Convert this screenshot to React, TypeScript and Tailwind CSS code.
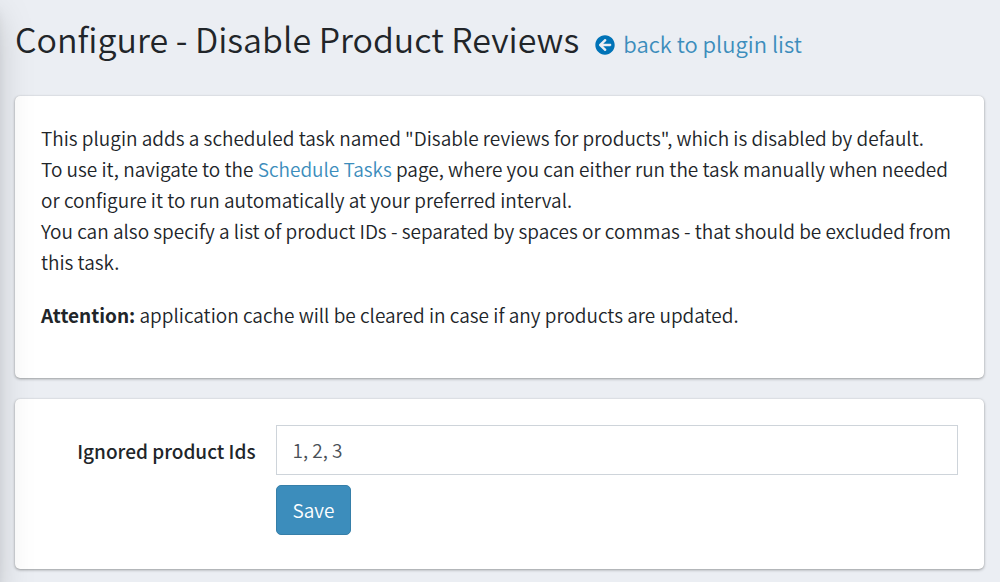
import React, { useState } from 'react';
import { FaArrowCircleLeft } from 'react-icons/fa';

const Card: React.FC<{ children: React.ReactNode }> = ({ children }) => (
  <section className="rounded-[5px] bg-white p-[26px] shadow-[0_0_1px_rgba(0,0,0,0.125),0_1px_3px_rgba(0,0,0,0.35)]">
    {children}
  </section>
);

const App: React.FC = () => {
  const [ignoredIds, setIgnoredIds] = useState('1, 2, 3');

  return (
    <div className="relative min-h-screen overflow-hidden bg-[#ebeef3] pt-[14px] pr-4 pb-3 pl-[15px] font-['Noto_Sans_CJK_SC','Source_Sans_Pro',sans-serif] text-[19px] leading-[31px] font-[350] text-[#212529]">
      {/* shadow thrown by the sidebar */}
      <div className="pointer-events-none absolute inset-y-0 -left-66 z-10 w-64 shadow-[0_18px_37px_rgba(0,0,0,0.25),0_13px_13px_rgba(0,0,0,0.22)]" />

      <header className="mb-8 flex items-baseline gap-4">
        <h1 className="text-[34px] leading-[50px] font-[350]">Configure - Disable Product Reviews</h1>
        <a href="#plugins" className="text-[22px] text-[#3c8dbc]">
          <FaArrowCircleLeft className="mr-2 inline size-5 align-[-2px] text-[#0073b7]" />
          back to plugin list
        </a>
      </header>

      <main className="flex flex-col gap-[21px]">
        <Card>
          <p>
            This plugin adds a scheduled task named "Disable reviews for products", which is disabled by default.
            <br />
            To use it, navigate to the <a href="#tasks" className="text-[#3c8dbc]">Schedule Tasks</a> page, where you can either run the task manually when needed or configure it to run automatically at your preferred interval.
            <br />
            You can also specify a list of product IDs - separated by spaces or commas - that should be excluded from this task.
          </p>
          <p className="my-[22px]">
            <b className="font-bold">Attention:</b> application cache will be cleared in case if any products are updated.
          </p>
        </Card>

        <Card>
          <form className="grid grid-cols-[11fr_35fr] gap-x-5 gap-y-[10px] pb-2" onSubmit={(e) => e.preventDefault()}>
            <label htmlFor="ignored-ids" className="self-center text-right font-medium">Ignored product Ids</label>
            <input
              id="ignored-ids"
              type="text"
              value={ignoredIds}
              onChange={(e) => setIgnoredIds(e.target.value)}
              className="h-[50px] w-full border border-[#ced4da] px-4 pb-[2px] text-[#495057]"
            />
            <button type="submit" className="col-start-2 h-[50px] justify-self-start rounded-[5px] border border-[#367fa9] bg-[#3c8dbc] px-4 pb-[2px] text-white">
              Save
            </button>
          </form>
        </Card>
      </main>
    </div>
  );
};

export default App;
